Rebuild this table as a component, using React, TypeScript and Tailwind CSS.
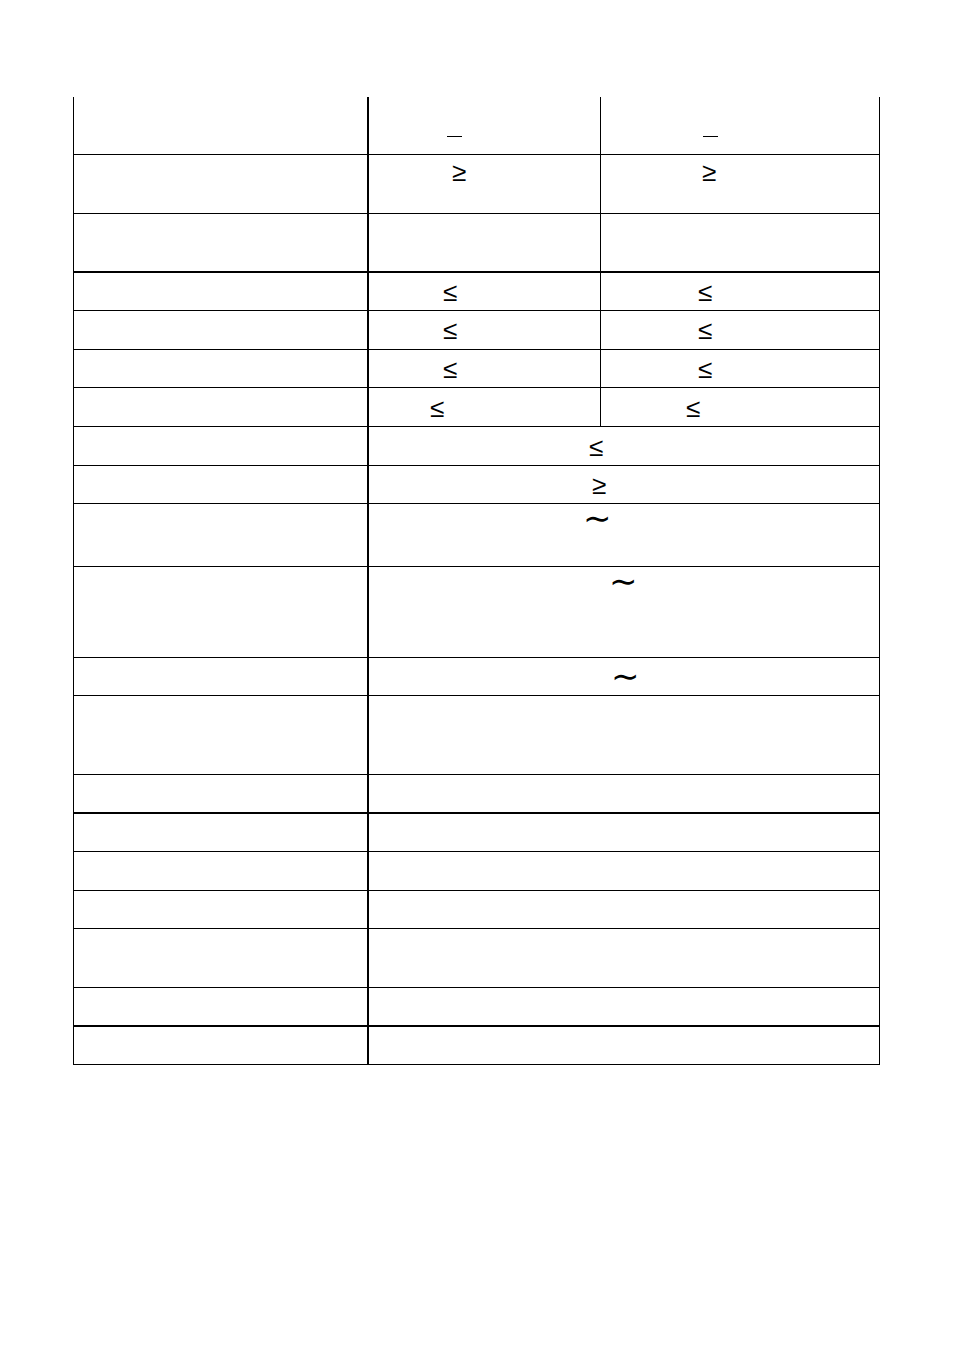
import React from "react";

const glyph = "block w-fit font-['Liberation_Sans',_sans-serif] text-[26px] leading-[26px] text-black";
const tilde = "block w-fit font-['Liberation_Serif',_serif] text-[34px] leading-[26px] text-black";

function Row({ h, thick, children }: { h: string; thick?: boolean; children?: React.ReactNode }) {
  return (
    <div className={`flex ${h} ${thick ? "border-b-2" : "border-b"} border-black`}>
      <div className="w-[295px] shrink-0 border-r-2 border-black" />
      {children}
    </div>
  );
}

function Split({ a, b }: { a?: React.ReactNode; b?: React.ReactNode }) {
  return (
    <>
      <div className="w-[232px] shrink-0 border-r border-black">{a}</div>
      <div className="flex-1">{b}</div>
    </>
  );
}

function Merged({ children }: { children?: React.ReactNode }) {
  return <div className="flex-1">{children}</div>;
}

export default function App() {
  return (
    <div className="min-h-[1354px] w-[954px] bg-white">
      <div className="ml-[73px] pt-[97px]">
        <div className="w-[807px] border-x border-black">
          <Row h="h-[58px]">
            <Split
              a={<div className="ml-[78px] mt-[39px] h-px w-[15px] bg-black" />}
              b={<div className="ml-[102px] mt-[39px] h-px w-[15px] bg-black" />}
            />
          </Row>
          <Row h="h-[59px]">
            <Split
              a={<span className={`${glyph} ml-[83px] mt-[4px]`}>≥</span>}
              b={<span className={`${glyph} ml-[101px] mt-[4px]`}>≥</span>}
            />
          </Row>
          <Row h="h-[59px]" thick>
            <Split />
          </Row>
          <Row h="h-[38px]">
            <Split
              a={<span className={`${glyph} ml-[74px] mt-[6px]`}>≤</span>}
              b={<span className={`${glyph} ml-[97px] mt-[6px]`}>≤</span>}
            />
          </Row>
          <Row h="h-[39px]">
            <Split
              a={<span className={`${glyph} ml-[74px] mt-[6px]`}>≤</span>}
              b={<span className={`${glyph} ml-[97px] mt-[6px]`}>≤</span>}
            />
          </Row>
          <Row h="h-[38px]">
            <Split
              a={<span className={`${glyph} ml-[74px] mt-[6px]`}>≤</span>}
              b={<span className={`${glyph} ml-[97px] mt-[6px]`}>≤</span>}
            />
          </Row>
          <Row h="h-[39px]">
            <Split
              a={<span className={`${glyph} ml-[61px] mt-[7px]`}>≤</span>}
              b={<span className={`${glyph} ml-[85px] mt-[7px]`}>≤</span>}
            />
          </Row>
          <Row h="h-[39px]">
            <Merged>
              <span className={`${glyph} ml-[220px] mt-[7px]`}>≤</span>
            </Merged>
          </Row>
          <Row h="h-[38px]">
            <Merged>
              <span className={`${glyph} ml-[223px] mt-[6px]`}>≥</span>
            </Merged>
          </Row>
          <Row h="h-[63px]">
            <Merged>
              <span className={`${tilde} ml-[214px] mt-[2px]`}>∼</span>
            </Merged>
          </Row>
          <Row h="h-[91px]">
            <Merged>
              <span className={`${tilde} ml-[240px] mt-[2px]`}>∼</span>
            </Merged>
          </Row>
          <Row h="h-[38px]">
            <Merged>
              <span className={`${tilde} ml-[242px] mt-[6px]`}>∼</span>
            </Merged>
          </Row>
          <Row h="h-[79px]">
            <Merged />
          </Row>
          <Row h="h-[39px]" thick>
            <Merged />
          </Row>
          <Row h="h-[38px]">
            <Merged />
          </Row>
          <Row h="h-[39px]">
            <Merged />
          </Row>
          <Row h="h-[38px]">
            <Merged />
          </Row>
          <Row h="h-[59px]">
            <Merged />
          </Row>
          <Row h="h-[39px]" thick>
            <Merged />
          </Row>
          <Row h="h-[38px]">
            <Merged />
          </Row>
        </div>
      </div>
    </div>
  );
}
